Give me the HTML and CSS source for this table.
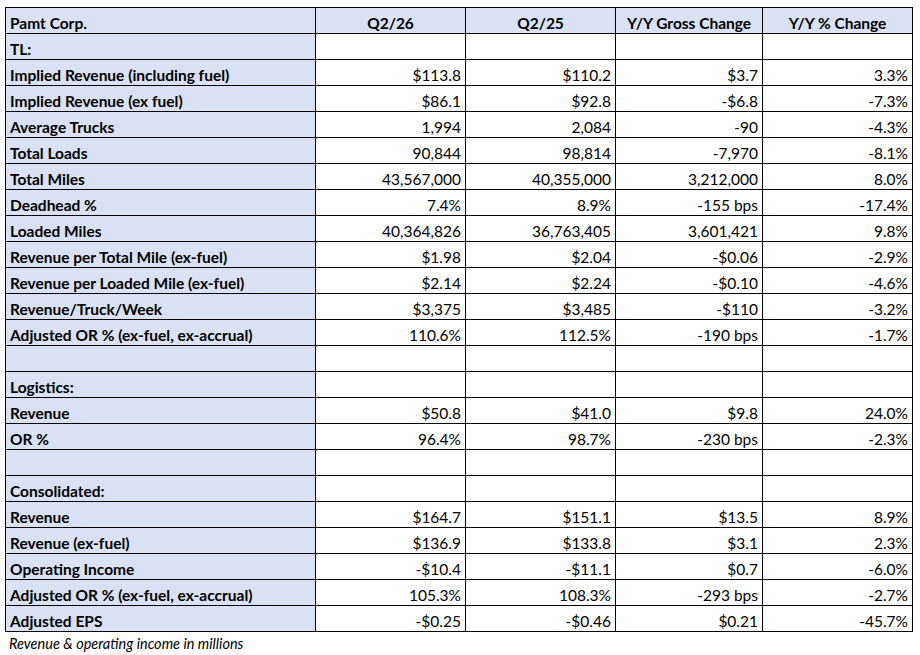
FILE: index.html
```html
<!DOCTYPE html>
<html>
<head>
<meta charset="utf-8">
<link rel="stylesheet" href="styles.css">
</head>
<body>
<div class="page">
<table class="sheet">
<colgroup>
<col class="c-label"><col class="c-num"><col class="c-num"><col class="c-gross"><col class="c-num">
</colgroup>
<thead>
<tr class="head"><th class="label">Pamt Corp.</th><th>Q2/26</th><th>Q2/25</th><th>Y/Y Gross Change</th><th>Y/Y % Change</th></tr>
</thead>
<tbody>
<tr><th class="label">TL:</th><td></td><td></td><td></td><td></td></tr>
<tr><th class="label">Implied Revenue (including fuel)</th><td>$113.8</td><td>$110.2</td><td>$3.7</td><td>3.3%</td></tr>
<tr><th class="label">Implied Revenue (ex fuel)</th><td>$86.1</td><td>$92.8</td><td>-$6.8</td><td>-7.3%</td></tr>
<tr><th class="label">Average Trucks</th><td>1,994</td><td>2,084</td><td>-90</td><td>-4.3%</td></tr>
<tr><th class="label">Total Loads</th><td>90,844</td><td>98,814</td><td>-7,970</td><td>-8.1%</td></tr>
<tr><th class="label">Total Miles</th><td>43,567,000</td><td>40,355,000</td><td>3,212,000</td><td>8.0%</td></tr>
<tr><th class="label">Deadhead %</th><td>7.4%</td><td>8.9%</td><td>-155 bps</td><td>-17.4%</td></tr>
<tr><th class="label">Loaded Miles</th><td>40,364,826</td><td>36,763,405</td><td>3,601,421</td><td>9.8%</td></tr>
<tr><th class="label">Revenue per Total Mile (ex-fuel)</th><td>$1.98</td><td>$2.04</td><td>-$0.06</td><td>-2.9%</td></tr>
<tr><th class="label">Revenue per Loaded Mile (ex-fuel)</th><td>$2.14</td><td>$2.24</td><td>-$0.10</td><td>-4.6%</td></tr>
<tr><th class="label">Revenue/Truck/Week</th><td>$3,375</td><td>$3,485</td><td>-$110</td><td>-3.2%</td></tr>
<tr><th class="label">Adjusted OR % (ex-fuel, ex-accrual)</th><td>110.6%</td><td>112.5%</td><td>-190 bps</td><td>-1.7%</td></tr>
<tr><th class="label"></th><td></td><td></td><td></td><td></td></tr>
<tr><th class="label">Logistics:</th><td></td><td></td><td></td><td></td></tr>
<tr><th class="label">Revenue</th><td>$50.8</td><td>$41.0</td><td>$9.8</td><td>24.0%</td></tr>
<tr><th class="label">OR %</th><td>96.4%</td><td>98.7%</td><td>-230 bps</td><td>-2.3%</td></tr>
<tr><th class="label"></th><td></td><td></td><td></td><td></td></tr>
<tr><th class="label">Consolidated:</th><td></td><td></td><td></td><td></td></tr>
<tr><th class="label">Revenue</th><td>$164.7</td><td>$151.1</td><td>$13.5</td><td>8.9%</td></tr>
<tr><th class="label">Revenue (ex-fuel)</th><td>$136.9</td><td>$133.8</td><td>$3.1</td><td>2.3%</td></tr>
<tr><th class="label">Operating Income</th><td>-$10.4</td><td>-$11.1</td><td>$0.7</td><td>-6.0%</td></tr>
<tr><th class="label">Adjusted OR % (ex-fuel, ex-accrual)</th><td>105.3%</td><td>108.3%</td><td>-293 bps</td><td>-2.7%</td></tr>
<tr><th class="label">Adjusted EPS</th><td>-$0.25</td><td>-$0.46</td><td>$0.21</td><td>-45.7%</td></tr>
</tbody>
</table>
<p class="note">Revenue &amp; operating income in millions</p>
</div>
</body>
</html>
```
FILE: styles.css
```css
html, body {
  margin: 0;
  padding: 0;
  background: #ffffff;
}
.page {
  padding: 7px 0 0 5px;
  font-family: "Lato", "Open Sans", sans-serif;
  color: #000;
}
.sheet {
  border-collapse: collapse;
  table-layout: fixed;
  width: 907px;
  border: 1px solid #000;
}
.c-label { width: 310px; }
.c-num { width: 150px; }
.c-gross { width: 147px; }
.sheet th, .sheet td {
  height: 26px;
  box-sizing: border-box;
  border: 1px solid #000;
  padding: 4px 4px 0 4px;
  font-size: 15.5px;
  line-height: 20px;
  white-space: nowrap;
  overflow: hidden;
  vertical-align: bottom;
}
.sheet td {
  text-align: right;
  font-weight: 400;
  background: #ffffff;
}
.sheet th {
  font-weight: 700;
  background: #d9e1f2;
  text-align: center;
}
.sheet th.label {
  text-align: left;
  padding-left: 4px;
}
.note {
  margin: 3px 0 0 4px;
  font-size: 14.5px;
  font-style: italic;
  line-height: 18px;
}
```
